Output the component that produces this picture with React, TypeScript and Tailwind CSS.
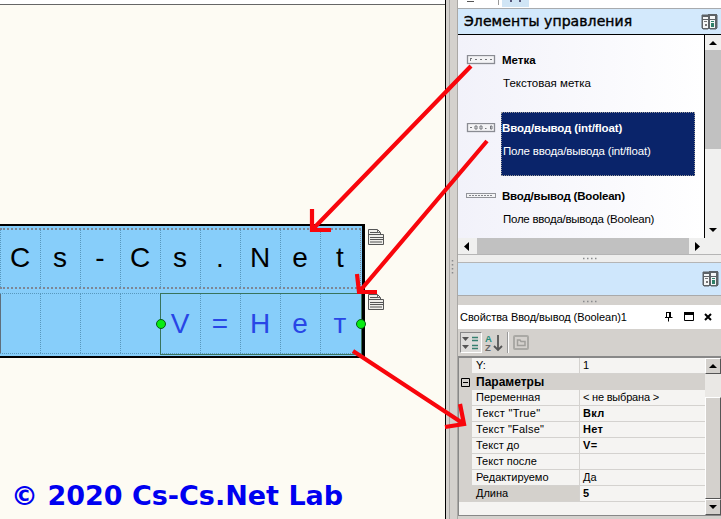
import React from "react";

const Tri = ({ d, c = "" }: { d: "u" | "d" | "l" | "r"; c?: string }) => {
  const p = {
    u: "M0 4L4 0L8 4Z",
    d: "M0 0L4 4L8 0Z",
    l: "M5 0L0 4.5L5 9Z",
    r: "M0 0L5 4.5L0 9Z",
  }[d];
  const v = d === "u" || d === "d";
  return (
    <svg width={v ? 8 : 5} height={v ? 4 : 9} className={`shrink-0 ${c}`}>
      <path d={p} fill="#000" />
    </svg>
  );
};

const Books = () => (
  <svg width="17" height="16" className="shrink-0">
    <path d="M1 1H7L8 0H15L16 1V14L15 15H9L8 14L7 15H2L1 14Z" fill="#5d6266" stroke="#5d6266" />
    <path d="M2 3H7V5H2ZM9 2H14V5H9ZM2 6H7V14H2ZM9 6H14V14H9Z" fill="#f4f6f6" />
    <path d="M3 7H6V8H3ZM4 10H6V12H4Z" fill="#777" />
    <path d="M10 9H13V13H10ZM10 7H13V8H10Z" fill="#2f8068" />
  </svg>
);

const Strip = ({ kind }: { kind: "label" | "field" | "bool" }) => (
  <svg width="30" height="10" className="shrink-0">
    {kind === "bool" ? (
      <>
        <rect x="0.5" y="2.5" width="29" height="4" fill="#f4f4f6" stroke="#92949a" />
        <path d="M3 4.5H27" stroke="#85878c" strokeDasharray="2 1" />
      </>
    ) : (
      <>
        <rect x="1.5" y="0.5" width="27" height="8" fill="#f4f4f6" stroke="#8a8c93" strokeWidth="1.3" />
        {kind === "label" ? (
          <path d="M4 3.5H6M4.5 3.5V6M9 4.5H11M14 4.5H16M19 4.5H21M24 4.5H26" stroke="#73757a" />
        ) : (
          <path d="M4 4.5H6M9 3H11V6H9ZM14 3H16V6H14ZM19 5.5H20.5M24.5 3H26V6H24.5Z" stroke="#73757a" fill="none" />
        )}
      </>
    )}
  </svg>
);

const Note = () => (
  <svg width="16" height="16" className="block">
    <path d="M.5.5H9.5L12.5 3.5V5.5H15.5V15.5H.5Z" fill="#efeeea" stroke="#555" />
    <path d="M2 3.5H12M.5 5.5H13M2 8.5H15M2 10.5H15M2 13H14" stroke="#555" />
    <path d="M9.5 1V3.5H12" stroke="#666" fill="none" />
  </svg>
);

const Dots = () => (
  <svg width="15" height="3">
    <path d="M1 1.5H15" stroke="#888a8c" strokeWidth="1.5" strokeDasharray="1.5 2.5" />
  </svg>
);

const row1 = ["C", "s", "-", "C", "s", ".", "N", "e", "t"];
const row2 = ["", "", "", "", "V", "=", "Н", "е", "т"];

const Item = ({ title, sub, kind, sel, tw, sw }: { title: string; sub: string; kind: "label" | "field" | "bool"; sel?: boolean; tw: string; sw: string }) => (
  <div className="flex h-[68px] pl-2">
    <div className="pt-[11px]"><Strip kind={kind} /></div>
    <div className={`ml-[5px] h-[64px] w-[194px] pl-px ${sel ? "bg-[#0a246a] text-white outline outline-dotted outline-offset-[-1px] outline-[#999]" : "text-black"}`}>
      <div className={`h-[16px] pt-[8px] text-[11.5px] leading-[16px] font-bold whitespace-nowrap ${tw}`}>{title}</div>
      <div className={`mt-[15px] pl-px text-[11.5px] leading-[16px] whitespace-nowrap ${sw}`}>{sub}</div>
    </div>
  </div>
);

const props = [
  { k: "Переменная", v: "< не выбрана >", b: false, kw: "", vw: "tracking-[-0.2px]" },
  { k: 'Текст "True"', v: "Вкл", b: true, kw: "tracking-[0.3px]", vw: "tracking-[0.3px]" },
  { k: 'Текст "False"', v: "Нет", b: true, kw: "tracking-[0.2px]", vw: "tracking-[0.3px]" },
  { k: "Текст до", v: "V=", b: true, kw: "", vw: "tracking-[0.5px]" },
  { k: "Текст после", v: "", b: false, kw: "", vw: "" },
  { k: "Редактируемо", v: "Да", b: false, kw: "", vw: "" },
  { k: "Длина", v: "5", b: true, kw: "", vw: "" },
];

const Row = ({ k, v, b, dark, kw = "", vw = "" }: { k: string; v: string; b?: boolean; dark?: boolean; kw?: string; vw?: string }) => (
  <div className="flex h-4 text-[11px] leading-[15px] whitespace-nowrap">
    <div className="w-[13px] shrink-0" />
    <div className={`w-[108px] shrink-0 border-r border-b border-[#d4d2cf] pl-[4px] ${kw} ${dark ? "bg-[#d4d1cc]" : "bg-[#f5f4f2]"}`}>{k}</div>
    <div className={`flex-1 border-b border-[#d4d2cf] bg-[#f5f4f2] pl-[3px] ${vw} ${b ? "font-bold" : ""}`}>{v}</div>
  </div>
);

export default function App() {
  return (
    <div className="relative flex h-[519px] w-[721px] overflow-hidden bg-[#d4d1cd] font-['Liberation_Sans',Arial,sans-serif] text-black">
      <main className="h-full w-[446px] shrink-0 border-r border-black bg-[#fdfbf3]">
        <div className="h-[5px] border-b border-[#666] bg-white" />
        <div className="h-[219px]" />
        <div className="relative h-[134px] w-[365px] border-y-2 border-r-[3px] border-black bg-[#87cefa] pt-[2px]">
          <div className="flex h-[61px] w-[361px] border-y-2 border-r border-dotted border-[#7d8796]">
            {row1.map((c, i) => (
              <div key={i} className="w-10 shrink-0 border-l border-dotted border-[#5898bd] pr-px text-center text-[28px] leading-[56px]">{c}</div>
            ))}
          </div>
          <div className="mt-[4px] flex h-[61px] w-[361px] border-y border-dotted border-y-[#5898bd]">
            {row2.map((c, i) => (
              <div key={i} className={`w-10 shrink-0 border-l pr-px text-center text-[28px] leading-[59px] text-[#2846e6] ${i === 0 ? "border-[#5f6f7c]" : "border-dotted border-[#5898bd]"}`}>{c}</div>
            ))}
          </div>
          <div className="absolute top-[67px] left-[160px] h-[62px] w-[202px] border border-[#38735c]" />
          <div className="absolute top-[93px] left-[156px] size-[10px] rounded-full border border-[#075b14] bg-[#08ec12]" />
          <div className="absolute top-[93px] left-[356px] size-[10px] rounded-full border border-[#075b14] bg-[#08ec12]" />
          <div className="absolute top-[3px] left-[368px]"><Note /></div>
          <div className="absolute top-[68px] left-[368px]"><Note /></div>
        </div>
        <div className="pt-[122px] pl-[11px] font-['DejaVu_Sans',Verdana,sans-serif] text-[27px] leading-[32px] font-bold whitespace-nowrap text-[#0000f0]">© 2020 Cs-Cs.Net Lab</div>
      </main>

      <div className="flex w-[12px] shrink-0 items-center border-r border-[#aaa8a5] bg-[#d4d1cd] pl-[3px]">
        <div className="h-full w-px bg-[#aaa8a5]" />
        <svg width="3" height="15" className="mt-[13px] ml-[1px]">
          <path d="M1.5 1V15" stroke="#888a8c" strokeWidth="1.5" strokeDasharray="1.5 2.5" />
        </svg>
      </div>

      <aside className="flex h-full min-w-0 flex-1 flex-col">
        <section className="flex h-[297px] flex-col">
          <div className="flex h-[8px] shrink-0 bg-white pl-[9px]">
            <div className="h-[2px] w-[7px] border-b border-[#555]" />
            <div className="ml-[24px] h-[5px] w-px bg-[#999]" />
            <div className="ml-[3px] flex h-[7px] w-[27px] justify-center gap-[7px] bg-[#d0e5f5]">
              <div className="h-[2px] w-[2px] bg-[#557]" />
              <div className="h-[2px] w-[2px] bg-[#557]" />
            </div>
          </div>
          <div className="flex h-[27px] shrink-0 items-center justify-between border-t border-b border-t-[#a8abae] border-b-black bg-[#d3e9fc] pr-[3px] pl-[6px]">
            <span className="-mt-[2px] font-['DejaVu_Sans',Verdana,sans-serif] text-[14px] leading-[18px] tracking-[0.08px] whitespace-nowrap [-webkit-text-stroke:0.4px_#000]">Элементы управления</span>
            <Books />
          </div>
          <div className="flex h-[203px] shrink-0">
            <div className="w-[247px] shrink-0 overflow-hidden border-r border-black bg-linear-to-r from-[#f2f2fa] to-white pt-[9px]">
              <Item title="Метка" sub="Текстовая метка" kind="label" tw="" sw="" />
              <Item title="Ввод/вывод (int/float)" sub="Поле ввода/вывода (int/float)" kind="field" sel tw="tracking-[-0.13px]" sw="tracking-[-0.18px]" />
              <Item title="Ввод/вывод (Boolean)" sub="Поле ввода/вывода (Boolean)" kind="bool" tw="tracking-[-0.2px]" sw="tracking-[-0.25px]" />
            </div>
            <div className="flex flex-1 flex-col items-center bg-[#f0f0ef]">
              <div className="flex h-[15px] items-center"><Tri d="u" /></div>
              <div className="h-[99px] w-full bg-[#c1c1c1]" />
              <div className="flex-1" />
              <Tri d="d" c="mb-[6px]" />
            </div>
          </div>
          <div className="flex h-[16px] shrink-0 items-center bg-[#f0f0ef] pl-[6px]">
            <Tri d="l" />
            <div className="ml-[8px] h-full w-[212px] bg-[#c1c1c1]" />
            <Tri d="r" c="ml-[6px]" />
          </div>
          <div className="flex h-[9px] shrink-0 items-center justify-center border-y border-[#b5b5b5] bg-[#eeeeed]"><Dots /></div>
          <div className="flex h-[33px] shrink-0 items-center justify-end border-b border-[#aaa] bg-[#cfe7fc] pr-[2px]"><Books /></div>
        </section>
        <div className="flex h-[8px] shrink-0 items-center justify-center"><Dots /></div>
        <section className="flex h-[211px] shrink-0 flex-col">
          <div className="flex h-[24px] shrink-0 items-center bg-white pl-[2px]">
            <span className="w-[205px] text-[11px] tracking-[-0.05px] whitespace-nowrap">Свойства Ввод/вывод (Boolean)1</span>
            <svg width="50" height="12">
              <path d="M1.5 1.5V6.5M5.5 1.5V6.5M1 1.5H6M0 6.5H7.5M3.5 7V10.5" stroke="#000" fill="none" />
              <path d="M4.5 1V6" stroke="#000" />
              <path d="M19.5 1.5H28.5V9.5H19.5Z" stroke="#000" fill="none" />
              <path d="M19 2.5H29" stroke="#000" strokeWidth="3" />
              <path d="M40 3L46 9M46 3L40 9" stroke="#000" strokeWidth="2" />
            </svg>
          </div>
          <div className="flex h-[27px] shrink-0 items-center pl-[2px]">
            <div className="flex h-[21px] w-[22px] items-center justify-center border border-t-[#888] border-r-white border-b-white border-l-[#888] bg-[#dedddb]">
              <svg width="18" height="15">
                <path d="M0 2H7L3.5 6ZM0 10H7L3.5 14Z" fill="#555" />
                <path d="M10 2.5H16M10 5.5H16M10 10.5H16M10 13.5H16" stroke="#36806f" strokeWidth="1.3" />
              </svg>
            </div>
            <div className="ml-[3px] flex h-[18px] w-[8px] flex-col text-[9.5px] leading-[9px] font-bold">
              <span className="h-[9px] overflow-hidden text-[#268b78]">A</span>
              <span className="h-[9px] overflow-hidden text-[#666]">Z</span>
            </div>
            <svg width="10" height="18">
              <path d="M5 1V16M1 12L5 16L9 12" stroke="#555" strokeWidth="1.8" fill="none" />
            </svg>
            <div className="ml-[4px] h-[21px] w-[2px] border-r border-l border-[#999] border-r-white" />
            <svg width="17" height="16" className="ml-[4px]">
              <rect x="1" y="1" width="14" height="13" rx="1" fill="none" stroke="#aaa9a5" strokeWidth="2" />
              <path d="M4.5 5H7L8 6.5H12V10.5H4.5Z" fill="none" stroke="#a09f9b" strokeWidth="1.5" />
            </svg>
          </div>
          <div className="flex h-[160px] shrink-0 border-t-2 border-b border-l border-[#888] bg-[#f5f4f2]">
            <div className="w-[246px] shrink-0">
              <div className="bg-[#d4d1cd]">
                <Row k="Y:" v="1" />
                <div className="flex h-4 items-center pl-[2px]">
                  <svg width="9" height="9"><path d="M.5.5H8.5V8.5H.5ZM2 4.5H7" stroke="#000" fill="none" /></svg>
                  <b className="ml-[6px] text-[12px] leading-[16px]">Параметры</b>
                </div>
                {props.map((p) => <Row key={p.k} {...p} dark={p.k === "Длина"} />)}
              </div>
            </div>
            <div className="flex flex-1 flex-col bg-[#eae8e5]">
              <div className="flex h-[16px] shrink-0 items-center justify-center border border-t-white border-r-[#555] border-b-[#555] border-l-white bg-[#d4d1cd]"><Tri d="u" /></div>
              <div className="mt-[23px] flex-1 border border-t-white border-r-[#555] border-b-[#555] border-l-white bg-[#d4d1cd]" />
              <div className="flex h-[16px] shrink-0 items-center justify-center border border-t-white border-r-[#555] border-b-[#555] border-l-white bg-[#d4d1cd]"><Tri d="d" /></div>
            </div>
          </div>
          <div className="h-[3px]" />
        </section>
      </aside>

      <svg className="pointer-events-none absolute inset-0" width="721" height="519" fill="none" stroke="#f8060c" strokeWidth="4.2">
        <path d="M471 66L312 230M312 209V230H331" />
        <path d="M487 141L359 292M357 274L359 292H377" />
        <path d="M353 351L464 424M460 404L464 424L445 427" />
      </svg>
    </div>
  );
}
